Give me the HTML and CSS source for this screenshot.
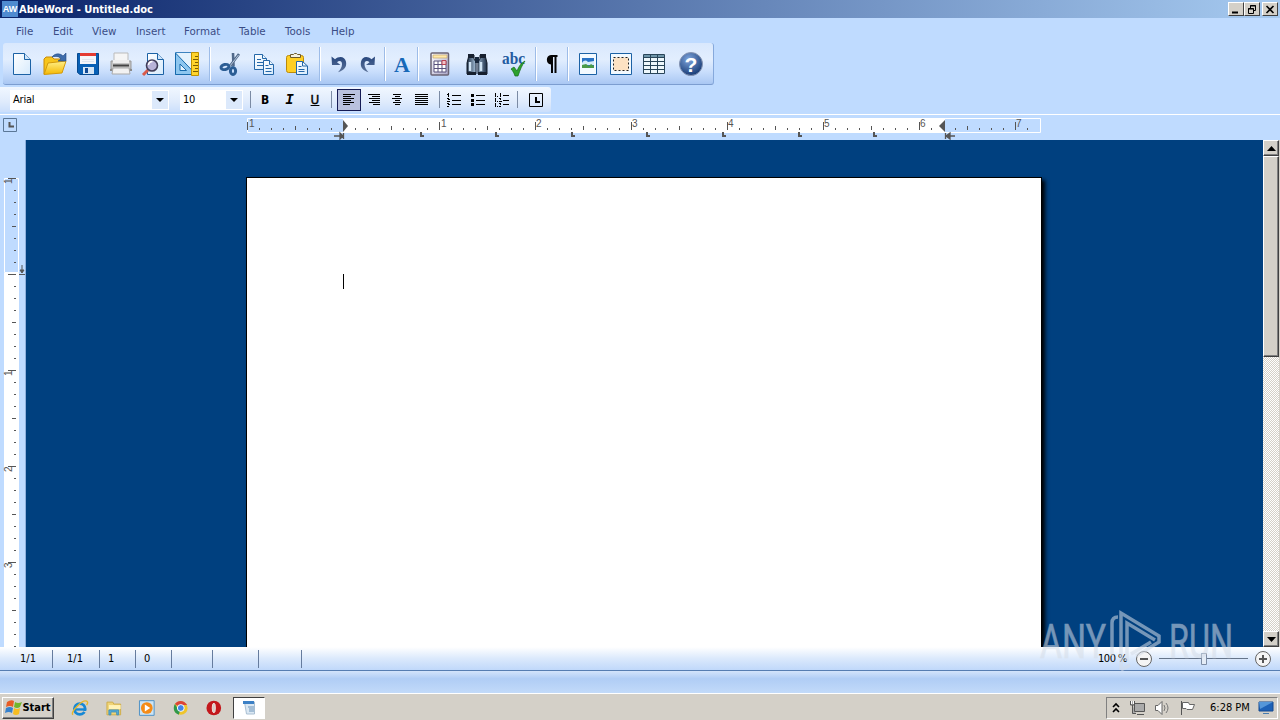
FILE: index.html
```
<!DOCTYPE html>
<html lang="en">
<head>
  <meta charset="UTF-8" />
  <title>AbleWord - Untitled.doc</title>
  <link rel="stylesheet" href="styles.css">
</head>
<body>
  <header class="titlebar">
    <span class="app-icon">AW</span>
    <h1><svg width="140" height="16"><text x="1" y="12" textLength="134" lengthAdjust="spacingAndGlyphs">AbleWord - Untitled.doc</text></svg></h1>
    <div class="window-buttons">
      <button><svg width="14" height="11"><path d="M3 8.500h6" stroke="#000" stroke-width="2"/></svg></button>
      <button><svg width="14" height="11"><path d="M5.500 4V1.500h5v5H9M5 2h6M3.500 4.500h5v5h-5zM3 5h6" fill="none" stroke="#000"/></svg></button>
      <button class="close"><svg width="14" height="11"><path d="M3.500 2l7 7M10.500 2l-7 7" stroke="#000" stroke-width="1.600"/></svg></button>
    </div>
  </header>

  <nav class="menu">
    <span>File</span><span>Edit</span><span>View</span><span>Insert</span><span>Format</span><span>Table</span><span>Tools</span><span>Help</span>
  </nav>

  <svg class="defs" width="0" height="0">
    <defs>
      <linearGradient id="paper" x2="1" y2="1"><stop offset="0" stop-color="#fff"/><stop offset="1" stop-color="#d6eafc"/></linearGradient>
      <linearGradient id="folder" x2="0" y2="1"><stop offset="0" stop-color="#fff08a"/><stop offset="1" stop-color="#f5b800"/></linearGradient>
      <linearGradient id="steel" x2="1"><stop offset="0" stop-color="#17273c"/><stop offset=".45" stop-color="#a9c4de"/><stop offset="1" stop-color="#1b2c44"/></linearGradient>
      <radialGradient id="ball" cx=".4" cy=".3" r=".75"><stop offset="0" stop-color="#7fa5dd"/><stop offset="1" stop-color="#12356f"/></radialGradient>
      <linearGradient id="arrow" x2="0" y2="1"><stop offset="0" stop-color="#28477d"/><stop offset="1" stop-color="#5b7299"/></linearGradient>
      <linearGradient id="lilac" x2="1" y2="1"><stop offset="0" stop-color="#fff"/><stop offset="1" stop-color="#aaa6c8"/></linearGradient>
    </defs>
  </svg>

  <div class="toolbar">
    <!-- new, open, save, print, preview, page setup -->
    <svg viewBox="0 0 24 24"><path d="M3.500 1.500h11l6 6v15h-17z" fill="url(#paper)" stroke="#1c62a5"/><path d="M14.500 1.500v6h6" fill="#cfe5fa" stroke="#1c62a5"/></svg>
    <svg viewBox="0 0 24 24"><path d="M1 22V7l2-2h6l2 2h9v4" fill="#f7c51c" stroke="#c78a08"/><path d="M1 22.500L5 11l18-2-4 12z" fill="url(#folder)" stroke="#d39a0c"/><path d="M9 5c3-4 8-4 11-1l3-3v8h-8l3-2c-2-3-5-3-9-2z" fill="#3e6caa" stroke="#204a87" stroke-width=".6"/></svg>
    <svg viewBox="0 0 24 24"><path d="M1.500 1.500h21v21H4l-2.500-2z" fill="#0860b5" stroke="#06498f"/><path d="M4 1h16v11H4z" fill="#f4f6fa"/><path d="M4 1h16v3H4z" fill="#e43b32"/><path d="M6 7.500h12M6 9.500h12" stroke="#dfe6ef"/><path d="M7 15h11v7H7z" fill="#d5e5f4"/><path d="M9 16h3v5H9z" fill="#114a94"/></svg>
    <svg viewBox="0 0 24 24"><path d="M5 1h14v10H5z" fill="#f5f5f5" stroke="#bbb"/><path d="M2 9h20v8H2z" fill="#c4c4c4" stroke="#999"/><path d="M4 8h16v3H4z" fill="#eee"/><path d="M4 12.500h16v2H4z" fill="#444"/><path d="M1 17h22v2H1z" fill="#8a8a8a"/><path d="M4 16h16l1 6H3z" fill="#f2f2f2" stroke="#aaa"/></svg>
    <svg viewBox="0 0 24 24"><path d="M5.500 1.500h10l6 6v15h-16z" fill="url(#paper)" stroke="#1c62a5"/><path d="M15.500 1.500v6h6" fill="#cfe5fa" stroke="#1c62a5"/><path d="M6 18l-5 5" stroke="#d85b4b" stroke-width="3"/><circle cx="10" cy="13.500" r="5.500" fill="#b8b3d8" stroke="#413d58" stroke-width="1.600"/><path d="M6.500 13a4 4 0 014-3.500" fill="none" stroke="#fff" stroke-width="1.500"/></svg>
    <svg viewBox="0 0 24 24"><path d="M.5.500h16v22H.5z" fill="#e3f2fd" stroke="#3c83bf"/><path d="M.5 1v21.500H21z" fill="#8dc6ef" stroke="#176aac"/><path d="M5 12v6.500h6.500z" fill="#e6f4ff" stroke="#176aac"/><path d="M16.500.5h7v23h-7z" fill="#ffd42b" stroke="#bd9100"/><path d="M20 4.500h3M18 7.500h5M20 10.500h3M18 13.500h5M20 16.500h3M18 19.500h5" stroke="#7b5d00"/></svg>
    <i></i>
    <!-- cut, copy, paste -->
    <svg viewBox="0 0 24 24"><path d="M20 2l-9 12M14 1l.5 13" stroke="#51698a" stroke-width="2.600"/><path d="M19.500 3l-8.500 11" stroke="#b9c9dc"/><ellipse cx="6" cy="15" rx="4" ry="2.500" fill="none" stroke="#2b5d94" stroke-width="3" transform="rotate(-12 6 15)"/><ellipse cx="14" cy="19" rx="2.600" ry="3.400" fill="none" stroke="#2b5d94" stroke-width="3"/></svg>
    <svg viewBox="0 0 24 24"><g fill="url(#paper)" stroke="#2467a8"><path d="M2.500 2.500h8l4 4v11h-12z"/><path d="M10.500 2.500v4h4M5 7.500h4M5 10.500h7M5 13.500h7" /><path d="M11.500 8.500h6l4 4v10h-10z"/><path d="M17.500 8.500v4h4M13.500 13.500h3M13.500 16.500h6M13.500 19.500h6"/></g></svg>
    <svg viewBox="0 0 24 24"><rect x="1.500" y="3.500" width="17" height="17" rx="2" fill="#ffcf24" stroke="#bb8a09"/><path d="M5.500 5.500v-3h3l1-1h2l1 1h3v3z" fill="#f5f1df" stroke="#6c5a2d"/><path d="M11.500 9.500h6l5 4.500v8.500h-11z" fill="url(#paper)" stroke="#2467a8"/><path d="M17.500 9.500V14h5M13.500 14.500h3M13.500 17.500h6M13.500 19.500h6" fill="none" stroke="#2467a8"/></svg>
    <i></i>
    <!-- undo, redo -->
    <svg viewBox="0 0 24 24"><path d="M2.500 4.500l.5 8.500h8.500L8 10.200c2.500-2 5-1.200 5 2 0 3-1.500 5-4 8 6-2 9-5 8-10.500-1-5.500-7-6.200-11-2.500z" fill="url(#arrow)"/></svg>
    <svg viewBox="0 0 24 24"><path d="M19 4.500l-.5 8.500H10l3.500-2.800c-2.500-2-5-1.200-5 2 0 3 1.500 5 4 8-6-2-8.500-5-7.500-10.500 1-5.500 6.500-6.200 10.500-2.500z" fill="url(#arrow)"/></svg>
    <i></i>
    <svg viewBox="0 0 24 24"><text class="letter" x="12" y="20" text-anchor="middle">A</text></svg>
    <i></i>
    <!-- calculator, find, spelling -->
    <svg viewBox="0 0 24 24"><rect x="3" y="1" width="17.500" height="22" rx="1" fill="url(#lilac)" stroke="#6b6474" stroke-width="1.500"/><path d="M5 3h14v3H5z" fill="#ffe9a8" stroke="#c4a76c" stroke-width=".7"/><path d="M6 9h12v11H6zM10 9v11M14 9v11M6 12.500h12M6 16.500h12" fill="#fff" stroke="#59527c"/><path d="M14 8.500h4v4h-4z" fill="#f1c3c8" stroke="#b94351"/></svg>
    <svg viewBox="0 0 24 24"><path d="M4 3h5v4l2 3v12H2V11zM15 3h5l2 8v11h-9V10l2-3z" fill="url(#steel)" stroke="#101a28"/><path d="M10 5h4v6h-4z" fill="#17273c"/><path d="M3 2h6v4H3zM15 2h6v4h-6zM2 20h9v3H2zM13 20h9v3h-9z" fill="#17202f"/><path d="M5 10v9M16 10v9" stroke="#cfe3f3" stroke-width="2.500"/></svg>
    <svg viewBox="0 0 24 24"><text class="abc" x="0" y="12" textLength="23" lengthAdjust="spacingAndGlyphs">abc</text><path d="M9 17l3-2 3 4c2-5 4-8 8-10-3 4-5 9-7 15h-3c-1-3-2-5-4-7z" fill="#2da12d" stroke="#146d19" stroke-width=".7"/></svg>
    <i></i>
    <svg viewBox="0 0 24 24"><path d="M11 12.500C5.500 12.500 5.500 3 11 3h6.500v2h-1v16h-2V5H13v16h-2z" fill="#050505"/></svg>
    <i></i>
    <!-- picture, frame, table, help -->
    <svg viewBox="0 0 24 24"><path d="M3.500 1.500h17v21h-17z" fill="#f3faff" stroke="#1c62a5"/><path d="M6 6h12v10H6z" fill="#2872c4"/><path d="M6 11c2-3 4-3 6-1l6-1v4H6z" fill="#d5ecfa"/><path d="M6 13l4-1 3 2 2-2 3 2v2H6z" fill="#4a9a48"/></svg>
    <svg viewBox="0 0 24 24"><path d="M1.500 1.500h21v21h-21z" fill="#f3faff" stroke="#1c62a5"/><path d="M4.500 5.500h15v13h-15z" fill="#fde2c3" stroke="#222" stroke-dasharray="2 2"/></svg>
    <svg viewBox="0 0 24 24"><path d="M1.500 2.500h21v19h-21z" fill="#eef7fb" stroke="#294559"/><path d="M2 3h20v2H2z" fill="#6e95a9"/><path d="M2 5.500h20M2 9.500h20M2 13.500h20M2 17.500h20M8.500 3v18M15.500 3v18" stroke="#294559"/></svg>
    <svg viewBox="0 0 24 24"><circle cx="12" cy="12" r="11.500" fill="url(#ball)" stroke="#8694b2"/><text class="question" x="12" y="19.500" text-anchor="middle">?</text></svg>
  </div>

  <div class="formatbar">
    <div class="combo font"><span>Arial</span><b></b></div>
    <div class="combo size"><span>10</span><b></b></div>
    <i></i>
    <button class="bold">B</button>
    <button class="italic">I</button>
    <button class="underline">U</button>
    <i></i>
    <button class="pressed"><svg width="14" height="14"><path d="M1 1.500h12M1 3.500h8M1 5.500h11M1 7.500h8M1 9.500h11M1 11.500h7"/></svg></button>
    <button><svg width="14" height="14"><path d="M1 1.500h12M5 3.500h8M2 5.500h11M5 7.500h8M2 9.500h11M6 11.500h7"/></svg></button>
    <button><svg width="14" height="14"><path d="M3 1.500h8M5 3.500h5M2 5.500h10M5 7.500h5M3 9.500h8M5 11.500h5"/></svg></button>
    <button><svg width="14" height="14"><path d="M1 1.500h13M1 3.500h13M1 5.500h13M1 7.500h13M1 9.500h13M1 11.500h13"/></svg></button>
    <i></i>
    <button><svg width="16" height="14"><path d="M6 2.500h9M6 7.500h9M6 11.500h9M2.500 0v4M1 1.500h1M1 5.500h2M2 6.500h2M1 8.500h3M1 10.500h2M2 11.500h2M1 13.500h2"/></svg></button>
    <button><svg width="16" height="14"><path d="M6 2.500h9M6 7.500h9M6 11.500h9"/><path class="solid" d="M1 1h3v3H1zM1 6h3v3H1zM1 10h3v3H1z"/></svg></button>
    <button><svg width="16" height="14"><path d="M9 2.500h6M9 7.500h6M9 11.500h6M1.500 0v4M3 3.500h1M6.500 0v4M1.500 5v4M3 8.500h1M5 5.500h2M6 6.500h1M5 8.500h3M1.500 10v4M3 13.500h1M5 10.500h2M6 11.500h1M5 13.500h2"/></svg></button>
    <i></i>
    <button><svg width="14" height="14"><path d="M.5.500h13v13H.5z"/><path d="M7 4v5h4" stroke-width="2"/></svg></button>
  </div>

  <div class="ruler-row">
    <svg width="1280" height="25">
      <defs>
        <pattern id="ticks" x="247" y="0" width="12" height="25" patternUnits="userSpaceOnUse"><path d="M.5 13v2" stroke="#555"/></pattern>
        <pattern id="halves" x="247" y="0" width="96" height="25" patternUnits="userSpaceOnUse"><path d="M.5 7v8M48.500 11v4" stroke="#555"/></pattern>
      </defs>
      <path d="M3.500 3.500h13v13h-13z" fill="none" stroke="#5b7796"/>
      <path d="M9.500 7v4.500H14" fill="none" stroke="#555" stroke-width="2"/>
      <path d="M247.500 3.500h793v14h-793z" fill="none" stroke="#fff"/>
      <path d="M343 3h602v15H343z" fill="#fff"/>
      <path d="M249 3h790v14H249z" fill="url(#ticks)"/>
      <path d="M247 3h792v14H247z" fill="url(#halves)"/>
      <g class="digits">
        <text x="249" y="12">1</text><text x="441" y="12">1</text><text x="536" y="12">2</text><text x="632" y="12">3</text>
        <text x="728" y="12">4</text><text x="824" y="12">5</text><text x="920" y="12">6</text><text x="1016" y="12">7</text>
      </g>
      <path d="M343 5v12l5-6z" fill="#555"/>
      <path d="M945 5v12l-6-6z" fill="#555"/>
      <path d="M334 21h7M343.500 18v6M340 18v6l3-3z" stroke="#555" fill="#555" stroke-width="1.300"/>
      <path d="M955 21h-7M945.500 18v6M950 18v6l-4-3z" stroke="#555" fill="#555" stroke-width="1.300"/>
      <path d="M421 17v4h3M496 17v4h3M572 17v4h3M647 17v4h3M723 17v4h3M799 17v4h3M874 17v4h3" fill="none" stroke="#555" stroke-width="2"/>
    </svg>
  </div>

  <main class="workspace">
    <svg class="side-ruler" width="26" height="507">
      <defs>
        <pattern id="vticks" x="0" y="38" width="26" height="12" patternUnits="userSpaceOnUse"><path d="M14 .5h2" stroke="#555"/></pattern>
        <pattern id="vhalves" x="0" y="38" width="26" height="96" patternUnits="userSpaceOnUse"><path d="M8 .5h8M12 48.500h4" stroke="#555"/></pattern>
      </defs>
      <path d="M4.500 38.500h14v94h-14z" fill="none" stroke="#fff"/>
      <path d="M4 133h15v374H4z" fill="#fff"/>
      <path d="M4 38h14v469H4z" fill="url(#vticks)"/>
      <path d="M4 38h14v469H4z" fill="url(#vhalves)"/>
      <g class="digits">
        <text transform="translate(12 44) rotate(-90)">1</text>
        <text transform="translate(12 236) rotate(-90)">1</text>
        <text transform="translate(12 332) rotate(-90)">2</text>
        <text transform="translate(12 428) rotate(-90)">3</text>
      </g>
      <path d="M22 125v7M19 134.500h6M20 130h4l-2 3z" fill="#555" stroke="#555"/>
      <path d="M25.500 0v507" stroke="#8fb0dc"/>
    </svg>
    <div class="canvas">
      <div class="page"><span class="caret"></span></div>
    </div>
    <div class="scrollbar">
      <button><svg width="9" height="5"><path d="M0 5l4.500-5L9 5z"/></svg></button>
      <div class="thumb"></div>
      <button class="down"><svg width="9" height="5"><path d="M0 0h9L4.500 5z"/></svg></button>
    </div>
  </main>

  <footer class="statusbar">
    <span>1/1</span><span>1/1</span><span>1</span><span>0</span><span></span><span></span><span></span>
    <div class="zoom">
      <label>100 %</label>
      <svg width="140" height="20">
        <g fill="#f5f5f5" stroke="#666"><circle cx="10" cy="10" r="7.500"/><circle cx="129" cy="10" r="7.500"/></g>
        <path d="M6 10h8M125 10h8M129 6v8" stroke="#555" stroke-width="2"/>
        <path d="M25 9.500h89" stroke="#66758a"/>
        <path d="M67.500 4.500h5v11h-5z" fill="#e4ecf6" stroke="#7d8da5"/>
      </svg>
    </div>
  </footer>
  <div class="strip"></div>

  <div class="taskbar">
    <button class="start">
      <svg width="17" height="17" viewBox="0 0 17 17"><path d="M2 3q4-3 7-1L8 8q-3-2-7 0z" fill="#e85c25"/><path d="M10 3q3 2 7 0l-2 5q-3 2-6 0z" fill="#72b62b"/><path d="M1 9q4-2 7 0l-1 5q-3-2-7 0z" fill="#3681cd"/><path d="M9 9q3 2 6 0l-1 6q-3 2-6 0z" fill="#f7bd21"/></svg>
      <span>Start</span>
    </button>
    <div class="quick">
      <svg viewBox="0 0 18 18"><circle cx="9" cy="10" r="5.500" fill="none" stroke="#1688d5" stroke-width="3"/><path d="M5 10.500h9" stroke="#1688d5" stroke-width="2.400"/><path d="M12 12h5v3z" fill="#d4d0c8"/><path d="M2 16C-1 13 12 0 16 2q2 1 0 4" fill="none" stroke="#e5b62b" stroke-width="1.500"/></svg>
      <svg viewBox="0 0 18 18"><path d="M2 3h6l1 2h7v11H2z" fill="#efd477" stroke="#cfad49"/><path d="M4 6h12v4H4z" fill="#fff3b8"/><path d="M4 16v-5h10v5h-2v-3H6v3z" fill="#55afd8" stroke="#438fb9"/></svg>
      <svg viewBox="0 0 18 18"><path d="M1.500 1.500h15v15h-15z" fill="#cce4f5" stroke="#4f91c6"/><circle cx="9" cy="9" r="6" fill="#f58b16"/><path d="M7 5.500v7L12.500 9z" fill="#fff"/></svg>
      <svg viewBox="0 0 18 18"><circle cx="9" cy="9" r="7" fill="#efc52c"/><path d="M9 9L3 5c3-5 10-4 12.500 1H9z" fill="#dc4437"/><path d="M9 9l-2 7C1 14 1 8 3 5l3 5z" fill="#30984b"/><circle cx="9" cy="9" r="3.500" fill="#4285e8" stroke="#fff"/></svg>
      <svg viewBox="0 0 18 18"><circle cx="9" cy="9" r="7.500" fill="#c3181c"/><ellipse cx="9" cy="9" rx="1.600" ry="5" fill="#d4d0c8" stroke="#f6dada"/></svg>
    </div>
    <div class="task">
      <svg width="18" height="16"><path d="M4.500 2h10v12h-8z" fill="#dbe8f3" stroke="#a9bfd2"/><path d="M3 1h11v3H3z" fill="#3c80c5"/><path d="M8 7h6M9 9h5M9 11h5" stroke="#6d94b9"/></svg>
    </div>
    <div class="tray">
      <svg width="10" height="14"><path d="M2 6l3-3 3 3M2 11l3-3 3 3" fill="none" stroke="#000" stroke-width="1.600"/></svg>
      <svg width="17" height="16"><path d="M5.500 3.500h10v8h-10zM8 14.500h7M1.500 1v4h4V1M3.500 5v8.500H7" fill="#aaa" stroke="#555"/><path d="M2.500 1v3M4.500 1v3" stroke="#fff"/></svg>
      <svg width="17" height="16"><path d="M1.500 5.500H4l4-4v13l-4-4H1.500z" fill="#fff" stroke="#666"/><path d="M10 5q2 3 0 6M12 3q4 5 0 10" fill="none" stroke="#777"/></svg>
      <svg width="17" height="16"><path d="M2.500 1v14" stroke="#555"/><path d="M3.500 2.500h6l1 2h5l-2 5H8l-1-1H3.500z" fill="#fff" stroke="#666"/></svg>
      <time>6:28 PM</time>
      <svg class="desktop" width="16" height="14"><path d="M1 1h14v9H1z" fill="#1e62b7" stroke="#14498e"/><path d="M1 1h14L2 8z" fill="#5597d9"/><path d="M5 12h6v1H5z" fill="#477cae"/></svg>
    </div>
  </div>

  <svg class="watermark" width="220" height="76">
    <text x="2" y="52" textLength="66" lengthAdjust="spacingAndGlyphs">ANY</text>
    <text x="131" y="52" textLength="64" lengthAdjust="spacingAndGlyphs">RUN</text>
    <path d="M74 50V17q0-6 6-6M83 64V7l38 23v6L98 50M89 55V17l28 17M93 48l20-12M83 64l9-5" />
  </svg>
</body>
</html>
```
FILE: styles.css
```
* {
  box-sizing: border-box;
}
body {
  margin: 0;
  width: 1280px;
  height: 720px;
  overflow: hidden;
  background: #bfdbff;
  font: 11px "DejaVu Sans Condensed", "DejaVu Sans", sans-serif;
  color: #000;
  display: flex;
  flex-direction: column;
}
svg {
  display: block;
  flex: none;
}
button {
  padding: 0;
  border: 0;
  background: none;
  font: inherit;
  display: flex;
  align-items: center;
  justify-content: center;
}
.defs {
  position: absolute;
}

/* title */
.titlebar {
  height: 18px;
  flex: none;
  display: flex;
  align-items: center;
  padding: 0 2px;
  background: linear-gradient(90deg, #0a246a, #a6caf0);
}
.app-icon {
  width: 16px;
  height: 16px;
  text-align: center;
  color: #fff;
  background: #4f8bd0;
  font: bold 9px/17px "Liberation Sans", sans-serif;
}
h1 {
  margin: 0;
  fill: #fff;
  font: bold 11px "DejaVu Sans Condensed", sans-serif;
}
.window-buttons {
  display: flex;
  margin-left: auto;
}
.window-buttons button {
  width: 16px;
  height: 14px;
  background: #d4d0c8;
  border: 1px solid;
  border-color: #fff #404040 #404040 #fff;
}
.window-buttons .close {
  margin-left: 2px;
}

.menu {
  height: 25px;
  flex: none;
  display: grid;
  grid-template-columns: 37px 39px 44px 48px 55px 46px 46px 40px;
  padding-left: 16px;
  font: 10.3px/27px "DejaVu Sans", sans-serif;
  color: #3a4c85;
}

/* toolbars */
.toolbar {
  width: 711px;
  height: 42px;
  flex: none;
  margin-left: 3px;
  padding-left: 2px;
  display: grid;
  grid-template-columns: 33px 34px 32px 34px 32px 34px 12px 29px 37px 30px 15px 28px 26px 7px 28px 4px 39px 36px 38px 5px 27px 5px 36px 30px 36px 38px;
  align-items: center;
  justify-items: center;
  border-radius: 3px;
  border-right: 1px solid #86a9dc;
  border-bottom: 1px solid #7c9dd0;
  background: linear-gradient(#d9e8fd, #e2eefe 40%, #c9defc 70%, #a9c7f3);
}
.toolbar svg {
  width: 24px;
  height: 24px;
  overflow: visible;
}
.toolbar i {
  width: 2px;
  height: 34px;
  border-left: 1px solid #9dbce8;
  border-right: 1px solid #fff;
}
.letter {
  font: bold 22px "Liberation Serif", serif;
  fill: #1769b8;
}
.abc {
  font: bold 17px "Liberation Serif", serif;
  fill: #245ba0;
}
.question {
  font: bold 21px "Liberation Sans", sans-serif;
  fill: #fff;
}
.formatbar {
  width: 551px;
  height: 25px;
  flex: none;
  margin-top: 2px;
  padding-left: 10px;
  display: grid;
  grid-template-columns: 170px 64px 13px 16px 33px 18px 14px 22px 27px 20px 27px 10px 20px 27px 21px 10px 27px;
  align-items: center;
  justify-items: center;
  border-radius: 0 3px 3px 0;
  background: linear-gradient(#f1f7ff, #dfebfc 60%, #cbdffc);
}
.formatbar i {
  width: 1px;
  height: 17px;
  background: #7b8ba4;
}
.formatbar path {
  fill: none;
  stroke: #000;
}
.formatbar .solid {
  fill: #000;
  stroke: none;
}
.combo {
  display: flex;
  justify-content: space-between;
  justify-self: start;
  height: 20px;
  padding-left: 2px;
  line-height: 18px;
  background: #fff;
  border: 1px solid #fff;
  letter-spacing: -0.2px;
}
.font { width: 159px; }
.size { width: 63px; }
.combo b {
  width: 16px;
  background: #dce9fb;
}
.combo b::after {
  content: "";
  display: block;
  margin: 7px 4px;
  border: 4px solid transparent;
  border-top-color: #000;
  border-bottom: 0;
}
.bold {
  font: bold 12px "DejaVu Sans Condensed", sans-serif;
}
.italic {
  font: italic bold 14px "Liberation Mono", monospace;
}
.underline {
  font: 12px "DejaVu Sans", sans-serif;
  text-decoration: underline;
  -webkit-text-stroke: 0.4px #000;
}
.pressed {
  width: 24px;
  height: 22px;
  background: #b9c1de;
  border: 1px solid #151b55;
}

/* rulers */
.ruler-row {
  height: 26px;
  flex: none;
  margin-top: 2px;
  border-top: 1px solid #fff;
}
.digits {
  font: 10px "Liberation Sans", sans-serif;
  fill: #555;
}
.workspace {
  height: 507px;
  flex: none;
  display: flex;
}
.canvas {
  flex: 1;
  overflow: hidden;
  padding: 37px 0 0 220px;
  background: #00407f;
}
.page {
  width: 796px;
  height: 600px;
  padding: 96px;
  background: #fff;
  border: 1px solid #000;
  box-shadow: 3px 3px 4px #000;
}
.caret {
  display: block;
  width: 1px;
  height: 15px;
  background: #000;
}
.scrollbar {
  width: 17px;
  display: flex;
  flex-direction: column;
  border-right: 1px solid #d4d0c8;
  background: repeating-conic-gradient(#fff 0 25%, #d4d0c8 0 50%) 0 0 / 2px 2px;
}
.scrollbar button, .thumb {
  height: 16px;
  background: #d4d0c8;
  border: 1px solid;
  border-color: #fff #404040 #404040 #fff;
  box-shadow: inset -1px -1px #808080;
}
.scrollbar .thumb {
  height: 201px;
}
.scrollbar .down {
  margin-top: auto;
}

/* bottom bars */
.statusbar {
  height: 24px;
  flex: none;
  display: grid;
  grid-template-columns: 53px 47px 36px 36px 41px 46px 43px 1fr;
  align-items: center;
  border-bottom: 1px solid #567db1;
  background: linear-gradient(#fff, #dbe9fc 50%, #c0d8fa);
}
.statusbar > span {
  height: 18px;
  padding-left: 8px;
  line-height: 18px;
  border-right: 1px solid #667c9e;
}
.statusbar > span:first-child {
  padding-left: 20px;
}
.statusbar > span:nth-child(2) {
  padding-left: 14px;
}
.zoom {
  display: flex;
  align-items: center;
  justify-content: flex-end;
  padding-right: 6px;
}
.zoom label {
  margin-right: 7px;
  letter-spacing: -0.5px;
}
.strip {
  height: 22px;
  flex: none;
  background: linear-gradient(#d3e4fb, #b0cdf5 35%, #c2daf9);
}
.taskbar {
  height: 27px;
  flex: none;
  display: flex;
  align-items: center;
  padding: 1px 2px 0;
  background: #d4d0c8;
  border-top: 1px solid #fff;
}
.start {
  width: 52px;
  height: 22px;
  font: bold 11px "DejaVu Sans Condensed", sans-serif;
  border: 1px solid;
  border-color: #fff #404040 #404040 #fff;
  box-shadow: inset -1px -1px #808080;
}
.quick {
  display: flex;
  gap: 16px;
  margin: 0 10px 0 17px;
}
.quick svg {
  width: 17.600px;
  height: 18px;
}
.task {
  width: 32px;
  height: 22px;
  padding: 2px 6px;
  background: #fff;
  border: 1px solid;
  border-color: #404040 #fff #fff #404040;
}
.tray {
  width: 172px;
  height: 22px;
  margin-left: auto;
  padding-left: 4px;
  display: flex;
  align-items: center;
  gap: 8px;
  border: 1px solid;
  border-color: #808080 #fff #fff #808080;
}
.tray time {
  margin-left: 6px;
  white-space: nowrap;
}
.watermark {
  position: absolute;
  left: 1038px;
  top: 606px;
  overflow: visible;
  opacity: .55;
}
.watermark text {
  font: 49px "Roboto", sans-serif;
  fill: #d5dde8;
  stroke: #d5dde8;
  stroke-width: 0.6;
}
.watermark path {
  fill: none;
  stroke: #d5dde8;
  stroke-width: 3.500;
}
```
